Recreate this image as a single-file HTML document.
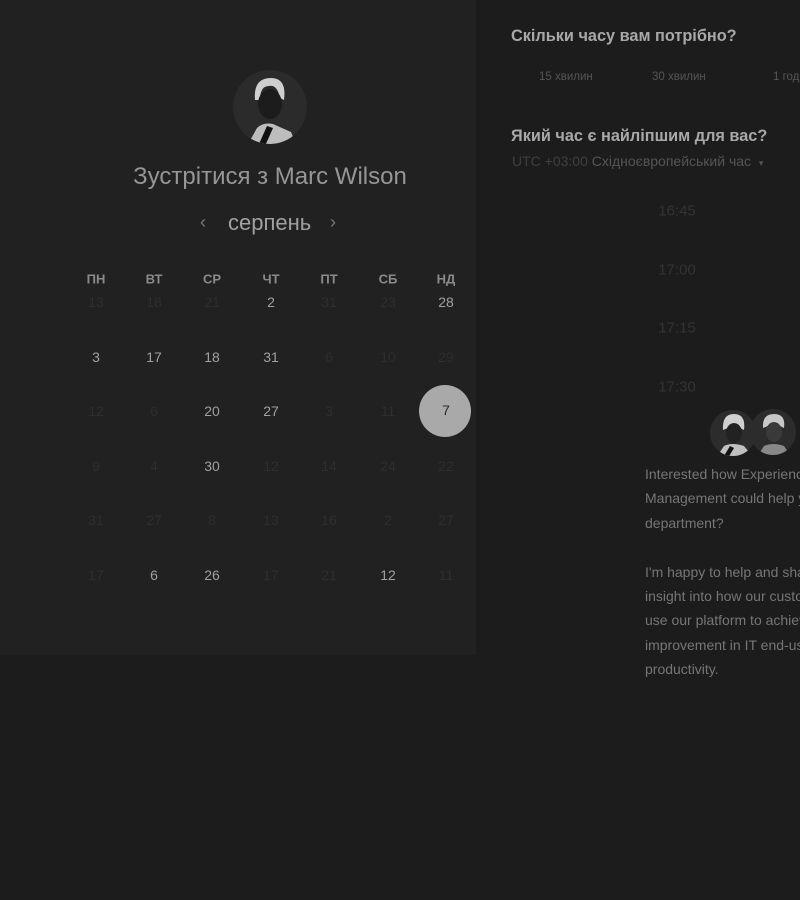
<!DOCTYPE html>
<html><head><meta charset="utf-8"><style>
*{margin:0;padding:0;box-sizing:border-box}
body{width:800px;height:900px;background:#1c1c1c;font-family:"Liberation Sans","DejaVu Sans",sans-serif;position:relative;overflow:hidden}
.a{position:absolute;white-space:nowrap}
#left{position:absolute;left:0;top:0;width:476px;height:655px;background:#212121}
.c{position:absolute;width:50px;text-align:center;transform:translate(-25px,-50%);font-size:14px}
.h{color:#8a8a8a;font-weight:bold;font-size:13px}
.on{color:#a0a0a0}
.off{color:#2e2e2e}
.t{color:#333;font-size:15px;left:520px;width:314px;text-align:center;transform:translateY(-50%)}
.p{position:absolute;left:645px;font-size:14px;color:#767676;line-height:24.4px;white-space:nowrap}
</style></head><body>
<div id="left"></div>
<svg class="a" style="left:233px;top:70px" width="74" height="74" viewBox="0 0 74 74">
<defs><clipPath id="cp"><circle cx="37" cy="37" r="37"/></clipPath></defs>
<circle cx="37" cy="37" r="37" fill="#2b2b2b"/>
<g clip-path="url(#cp)">
<path d="M22 30 Q20 8 38 8 Q54 8 51 30 L47 28 Q44 14 36 16 Q27 16 27 30Z" fill="#cfcfcf"/>
<ellipse cx="37" cy="34" rx="12" ry="15" fill="#1c1c1c"/>
<path d="M14 76 L24 58 Q30 52 40 54 L58 62 L64 76Z" fill="#bdbdbd"/>
<path d="M26 74 L34 56 L40 58 L32 76Z" fill="#111"/>
</g></svg>
<div class="a" style="left:0;width:540px;text-align:center;top:163px;font-size:24px;color:#969696">Зустрітися з Marc Wilson</div>
<div class="a" style="left:200px;top:212px;font-size:18px;color:#777">‹</div>
<div class="a" style="left:228px;top:210px;font-size:22px;color:#a0a0a0">серпень</div>
<div class="a" style="left:330px;top:212px;font-size:18px;color:#777">›</div>
<div class="c h" style="left:96px;top:279px">ПН</div>
<div class="c h" style="left:154px;top:279px">ВТ</div>
<div class="c h" style="left:212px;top:279px">СР</div>
<div class="c h" style="left:271px;top:279px">ЧТ</div>
<div class="c h" style="left:329px;top:279px">ПТ</div>
<div class="c h" style="left:388px;top:279px">СБ</div>
<div class="c h" style="left:446px;top:279px">НД</div>
<div style="position:absolute;left:419px;top:385px;width:52px;height:52px;border-radius:50%;background:#a9a9a9"></div>
<div class="c off" style="left:96px;top:302px">13</div><div class="c off" style="left:154px;top:302px">18</div><div class="c off" style="left:212px;top:302px">21</div><div class="c on" style="left:271px;top:302px">2</div><div class="c off" style="left:329px;top:302px">31</div><div class="c off" style="left:388px;top:302px">23</div><div class="c on" style="left:446px;top:302px">28</div>
<div class="c on" style="left:96px;top:357px">3</div><div class="c on" style="left:154px;top:357px">17</div><div class="c on" style="left:212px;top:357px">18</div><div class="c on" style="left:271px;top:357px">31</div><div class="c off" style="left:329px;top:357px">6</div><div class="c off" style="left:388px;top:357px">10</div><div class="c off" style="left:446px;top:357px">29</div>
<div class="c off" style="left:96px;top:411px">12</div><div class="c off" style="left:154px;top:411px">6</div><div class="c on" style="left:212px;top:411px">20</div><div class="c on" style="left:271px;top:411px">27</div><div class="c off" style="left:329px;top:411px">3</div><div class="c off" style="left:388px;top:411px">11</div><div class="c" style="left:446px;top:410px;color:#2a2a2a">7</div>
<div class="c off" style="left:96px;top:466px">9</div><div class="c off" style="left:154px;top:466px">4</div><div class="c on" style="left:212px;top:466px">30</div><div class="c off" style="left:271px;top:466px">12</div><div class="c off" style="left:329px;top:466px">14</div><div class="c off" style="left:388px;top:466px">24</div><div class="c off" style="left:446px;top:466px">22</div>
<div class="c off" style="left:96px;top:520px">31</div><div class="c off" style="left:154px;top:520px">27</div><div class="c off" style="left:212px;top:520px">8</div><div class="c off" style="left:271px;top:520px">13</div><div class="c off" style="left:329px;top:520px">16</div><div class="c off" style="left:388px;top:520px">2</div><div class="c off" style="left:446px;top:520px">27</div>
<div class="c off" style="left:96px;top:575px">17</div><div class="c on" style="left:154px;top:575px">6</div><div class="c on" style="left:212px;top:575px">26</div><div class="c off" style="left:271px;top:575px">17</div><div class="c off" style="left:329px;top:575px">21</div><div class="c on" style="left:388px;top:575px">12</div><div class="c off" style="left:446px;top:575px">11</div>

<div class="a" style="left:511px;top:27px;font-size:16.3px;font-weight:bold;color:#a8a8a8">Скільки часу вам потрібно?</div>
<div class="a" style="left:539px;top:71px;font-size:11.5px;color:#555">15 хвилин</div>
<div class="a" style="left:652px;top:71px;font-size:11.5px;color:#555">30 хвилин</div>
<div class="a" style="left:773px;top:71px;font-size:11.5px;color:#555">1 година</div>
<div class="a" style="left:511px;top:127px;font-size:16.3px;font-weight:bold;color:#a8a8a8">Який час є найліпшим для вас?</div>
<div class="a" style="left:512px;top:153px;font-size:14px;color:#555"><span style="color:#3f3f3f">UTC +03:00</span> Східноєвропейський час &nbsp;<span style="font-size:9px">▾</span></div>
<div class="a t" style="top:211px">16:45</div>
<div class="a t" style="top:270px">17:00</div>
<div class="a t" style="top:328px">17:15</div>
<div class="a t" style="top:387px">17:30</div>
<svg class="a" style="left:708px;top:408px" width="92" height="50">
<defs><clipPath id="c1"><circle cx="25" cy="25" r="23"/></clipPath><clipPath id="c2"><circle cx="65" cy="24" r="23"/></clipPath></defs>
<circle cx="65" cy="24" r="23" fill="#2c2c2c"/>
<g clip-path="url(#c2)"><path d="M55 20 Q54 6 66 6 Q78 6 76 20 L72 18 Q66 12 60 18Z" fill="#c8c8c8"/><path d="M48 50 L56 38 Q65 34 76 38 L84 50Z" fill="#888"/><ellipse cx="66" cy="24" rx="8" ry="10" fill="#3a3a3a"/></g>
<circle cx="25" cy="25" r="23" fill="#2c2c2c"/>
<g clip-path="url(#c1)"><path d="M15 22 Q14 6 26 6 Q38 6 36 22 L32 20 Q26 12 20 20Z" fill="#d0d0d0"/><ellipse cx="26" cy="25" rx="8" ry="10" fill="#222"/><path d="M8 50 L16 38 Q24 34 36 38 L46 50Z" fill="#c0c0c0"/><path d="M16 48 L22 38 L26 40 L20 50Z" fill="#111"/></g>
</svg>
<div class="p" style="top:462px">Interested how Experience<br>Management could help your<br>department?<br><br>I'm happy to help and share<br>insight into how our customers<br>use our platform to achieve<br>improvement in IT end-user<br>productivity.</div>
</body></html>
